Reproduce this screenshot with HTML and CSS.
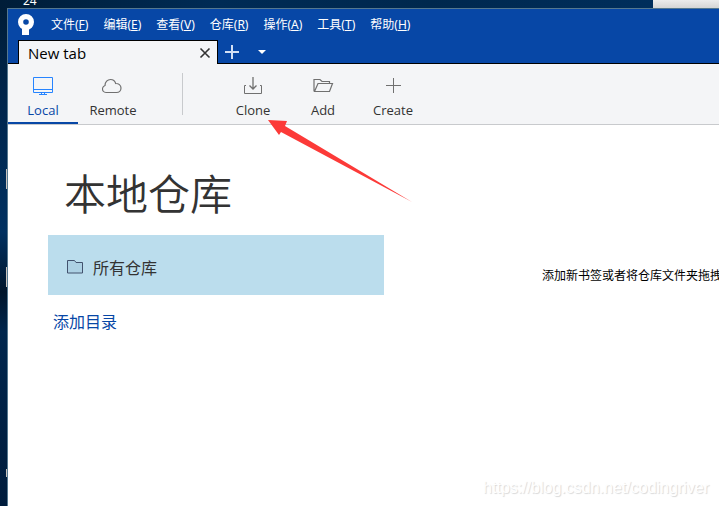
FILE: index.html
```
<!DOCTYPE html>
<html lang="zh-CN">
<head>
<meta charset="utf-8">
<title>Sourcetree</title>
<link rel="stylesheet" href="styles.css">
</head>
<body>
<div class="desktop">
  <div class="desktop-top"><span class="desktop-label">24</span><span class="desktop-panel"></span></div>
  <div class="desktop-row">
    <div class="desktop-edge"><i class="mark"></i><i class="mark"></i><i class="mark mark-small"></i></div>
    <div class="window">
      <header class="titlebar">
        <svg class="logo" width="18" height="22" viewBox="0 0 18 22" aria-hidden="true">
          <defs><linearGradient id="fade" x1="0" x2="1" y1="0" y2="0"><stop offset="0" stop-color="#fff" stop-opacity="0.6"/><stop offset="0.7" stop-color="#fff"/></linearGradient></defs>
          <circle cx="9" cy="8" r="5.400" fill="none" stroke="#fff" stroke-width="5.200"/>
          <path d="M5 15l4-2 3 1v7H5z" fill="#fff"/>
          <path d="M12 15.500L16 12l-3 1.500z" fill="url(#fade)"/>
        </svg>
        <nav class="menu">
          <button class="menu-item">文件(<u>F</u>)</button>
          <button class="menu-item">编辑(<u>E</u>)</button>
          <button class="menu-item">查看(<u>V</u>)</button>
          <button class="menu-item">仓库(<u>R</u>)</button>
          <button class="menu-item">操作(<u>A</u>)</button>
          <button class="menu-item">工具(<u>T</u>)</button>
          <button class="menu-item">帮助(<u>H</u>)</button>
        </nav>
      </header>
      <div class="tabs">
        <div class="tab">
          <span>New tab</span>
          <button class="tab-button" aria-label="Close tab">
            <svg width="12" height="12" viewBox="0 0 12 12"><path d="M1.500 1.500l9 9M10.500 1.500l-9 9" stroke="#333" stroke-width="1.600"/></svg>
          </button>
        </div>
        <button class="tab-button tab-new" aria-label="New tab">
          <svg width="14" height="14" viewBox="0 0 14 14"><path d="M7 0v14M0 7h14" stroke="#d3e0f4" stroke-width="2"/></svg>
        </button>
        <button class="tab-button tab-list" aria-label="Tab list">
          <svg width="8" height="4" viewBox="0 0 8 4"><path d="M0 0h8L4 4z" fill="#fff"/></svg>
        </button>
      </div>
      <div class="toolbar">
        <button class="tool tool-active">
          <svg width="22" height="20" viewBox="0 0 22 20" fill="none" stroke="#2684ff"><path d="M1.500 1.500h19v15h-19zM1 13.500h20M9.500 17v1.500M12.500 17v1.500M7 18.500h8"/></svg>
          <span>Local</span>
        </button>
        <button class="tool">
          <svg width="22" height="20" viewBox="0 0 22 20" fill="none" stroke="#707070" stroke-width="1.200"><path d="M4 16.500C1.500 16.500 0.300 14.500 0.500 12.500C0.700 10.800 1.700 10 3 9.500C3 6 5.500 3.500 8.500 3.500C11 3.500 13 5 13.700 7.500C16.500 7.300 19 9.300 19 12C19 14.700 17 16.500 14.500 16.500Z"/></svg>
          <span>Remote</span>
        </button>
        <div class="divider"></div>
        <button class="tool">
          <svg width="22" height="20" viewBox="0 0 22 20" fill="none" stroke="#707070"><path d="M4 9.500H2.500v8h17v-8H18"/><path d="M11 1v12M7.500 9.500L11 13l3.500-3.500" stroke-width="1.300"/></svg>
          <span>Clone</span>
        </button>
        <button class="tool">
          <svg width="22" height="20" viewBox="0 0 22 20" fill="none" stroke="#707070" stroke-width="1.200"><path d="M2 15.500V3.500h6l2 2h7.500v2M2 15.500h15.500L20.500 7.500H6L2.500 15.500"/></svg>
          <span>Add</span>
        </button>
        <button class="tool">
          <svg width="22" height="20" viewBox="0 0 22 20" fill="none" stroke="#707070"><path d="M11.500 2v15M4 9.500h15"/></svg>
          <span>Create</span>
        </button>
      </div>
      <main class="content">
        <section class="repos">
          <h1 class="heading">本地仓库</h1>
          <button class="repo-row">
            <svg width="16" height="14" viewBox="0 0 16 14" fill="#add1e4" stroke="#42526e"><path d="M.500.500h7l1.500 2h6.500v10.500H.500z"/></svg>
            <span>所有仓库</span>
          </button>
          <a class="add-link" href="#">添加目录</a>
        </section>
        <p class="hint">添加新书签或者将仓库文件夹拖拽</p>
      </main>
    </div>
  </div>
  <svg class="arrow" width="144" height="84" viewBox="0 0 144 84" aria-hidden="true"><path d="M0 0L19 1L17 6L144 82L13 12L11 15Z" fill="#fc3a38"/></svg>
  <div class="watermark">https://blog.csdn.net/codingriver</div>
</div>
</body>
</html>
```
FILE: styles.css
```
* { box-sizing: border-box; }

body {
  margin: 0;
  font-family: "Noto Sans", "Noto Sans CJK SC", sans-serif;
  color: #333;
}

button {
  margin: 0;
  padding: 0;
  border: 0;
  background: none;
  color: inherit;
  font: inherit;
}

svg { display: block; flex: none; }

.desktop {
  position: relative;
  display: flex;
  flex-direction: column;
  min-height: 100vh;
  overflow: hidden;
  background: #00264d;
}

.desktop-top {
  display: flex;
  justify-content: space-between;
  height: 8px;
  padding-left: 23px;
  background: linear-gradient(90deg, #001d38, #002b55 30%, #00284e 60%, #003060);
}

.desktop-label {
  color: #fff;
  font-size: 12px;
  line-height: 2px;
}

.desktop-panel {
  width: 66px;
  background: linear-gradient(#ececec, #d5d5d5);
}

.desktop-row { display: flex; flex: 1; }

.desktop-edge {
  display: flex;
  flex: none;
  flex-direction: column;
  align-items: flex-end;
  gap: 78px;
  width: 7px;
  padding-top: 161px;
  background: linear-gradient(#001d38, #00264d 20%, #003060 45%, #00152b 57%, #00264d 65%, #001c3c);
}

.mark {
  width: 1px;
  height: 20px;
  background: #c9c3bd;
}

.mark-small { height: 8px; margin-top: 104px; }

.window {
  display: flex;
  flex: 1;
  flex-direction: column;
  min-width: 0;
  border-top: 1px solid #55788f;
  border-left: 1px solid #55788f;
  background: #fff;
}

.titlebar {
  display: flex;
  align-items: center;
  gap: 16px;
  height: 31px;
  padding-left: 9px;
  background: #0747a6;
}

.menu { display: flex; gap: 15px; }

.menu-item {
  color: #fff;
  font-size: 12px;
  line-height: 16px;
  white-space: nowrap;
}

.tabs {
  display: flex;
  height: 24px;
  padding-left: 10px;
  background: linear-gradient(#000, #000) bottom / 100% 1px no-repeat #0747a6;
}

.tab {
  display: flex;
  align-items: center;
  justify-content: space-between;
  width: 200px;
  padding: 0 6px 0 9px;
  border: 1px solid #000;
  border-bottom: 0;
  background: #f4f5f7;
  color: #000;
  font-family: "Open Sans", sans-serif;
  font-size: 15px;
}

.tab-button {
  display: flex;
  align-items: center;
  justify-content: center;
}

.tab-new { width: 28px; }
.tab-list { width: 32px; }

.toolbar {
  display: flex;
  height: 61px;
  border-bottom: 1px solid #c8cacd;
  background: #f4f5f7;
}

.tool {
  display: flex;
  flex-direction: column;
  align-items: center;
  gap: 5px;
  width: 70px;
  padding-top: 12px;
  border-bottom: 2px solid transparent;
  font-family: "Open Sans", sans-serif;
  font-size: 13px;
  line-height: 18px;
}

.tool-active { border-color: #0747a6; color: #0747a6; }

.divider {
  width: 1px;
  height: 42px;
  margin: 9px 35px 9px 34px;
  background: #c8cacd;
}

.content { display: flex; flex: 1; }

.repos {
  flex: none;
  width: 376px;
  padding: 39px 0 0 40px;
}

.heading {
  margin: 0;
  padding-left: 16px;
  font-size: 42px;
  font-weight: 350;
  line-height: 60px;
}

.repo-row {
  display: flex;
  align-items: center;
  gap: 10px;
  width: 100%;
  height: 60px;
  margin-top: 11px;
  padding: 4px 0 0 19px;
  background: #bbdded;
  font-size: 16px;
}

.add-link {
  display: inline-block;
  margin: 15px 5px;
  color: #0747a6;
  font-size: 16px;
  line-height: 24px;
  text-decoration: none;
}

.hint {
  margin: 143px 0 0 158px;
  color: #000;
  font-size: 12px;
  line-height: 16px;
  white-space: nowrap;
}

.arrow {
  position: absolute;
  top: 120px;
  left: 268px;
}

.watermark {
  position: absolute;
  right: 10px;
  bottom: 8px;
  color: #fff;
  font-family: "Liberation Sans", sans-serif;
  font-size: 16px;
  line-height: 20px;
  text-shadow: 1px 1px 1px #d8d8d8;
}
```
